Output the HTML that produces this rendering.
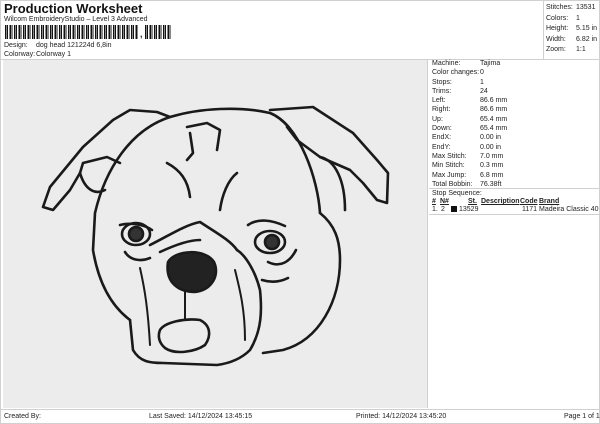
<!DOCTYPE html>
<html><head><meta charset="utf-8"><style>
*{margin:0;padding:0;box-sizing:border-box}
body{width:600px;height:424px;background:#fff;font-family:"Liberation Sans",sans-serif;color:#222;position:relative;overflow:hidden;font-size:7px}
.a{position:absolute;white-space:nowrap}
.bc{position:absolute;top:25px;height:14px;background:repeating-linear-gradient(90deg,#111 0 1.4px,#fff 1.4px 2.2px,#111 2.2px 3px,#fff 3px 4.5px)}
</style></head><body>
<div class="a" style="left:0;top:0;width:600px;height:424px;border:1px solid #d0d0d0"></div>
<div class="a" style="left:4px;top:1px;font-size:13px;font-weight:bold;color:#111">Production Worksheet</div>
<div class="a" style="left:4px;top:16px">Wilcom EmbroideryStudio – Level 3 Advanced</div>
<div class="bc" style="left:5px;width:133px"></div>
<div class="a" style="left:140px;top:29px;font-size:9px;font-weight:bold">,</div>
<div class="bc" style="left:145px;width:27px"></div>
<div class="a" style="left:4px;top:42px">Design:</div><div class="a" style="left:36px;top:42px">dog head 121224d 6,8in</div>
<div class="a" style="left:4px;top:51px">Colorway:</div><div class="a" style="left:36px;top:51px">Colorway 1</div>
<div class="a" style="left:543px;top:0;width:56px;height:59px;border-left:1px solid #d0d0d0"></div>
<div class="a" style="left:546px;top:3px;line-height:10.5px">Stitches:<br>Colors:<br>Height:<br>Width:<br>Zoom:</div>
<div class="a" style="left:576px;top:3px;line-height:10.5px">13531<br>1<br>5.15 in<br>6.82 in<br>1:1</div>
<div class="a" style="left:0;top:59px;width:600px;border-top:1px solid #d0d0d0"></div>
<div class="a" style="left:3px;top:60px;width:425px;height:348px;background:#ececec;border-right:1px solid #d0d0d0"></div>
<div class="a" style="left:432px;top:59px;line-height:9.3px">Machine:<br>Color changes:<br>Stops:<br>Trims:<br>Left:<br>Right:<br>Up:<br>Down:<br>EndX:<br>EndY:<br>Max Stitch:<br>Min Stitch:<br>Max Jump:<br>Total Bobbin:<br>Stop Sequence:</div>
<div class="a" style="left:480px;top:59px;line-height:9.3px">Tajima<br>0<br>1<br>24<br>86.6 mm<br>86.6 mm<br>65.4 mm<br>65.4 mm<br>0.00 in<br>0.00 in<br>7.0 mm<br>0.3 mm<br>6.8 mm<br>76.38ft</div>
<div class="a" style="left:429px;top:188px;width:170px;border-top:1px solid #d0d0d0"></div>
<div class="a" style="left:432px;top:198px;font-weight:bold;text-decoration:underline">#</div>
<div class="a" style="left:440px;top:198px;font-weight:bold;text-decoration:underline">N#</div>
<div class="a" style="left:468px;top:198px;font-weight:bold;text-decoration:underline">St.</div>
<div class="a" style="left:481px;top:198px;font-weight:bold;text-decoration:underline">Description</div>
<div class="a" style="left:520px;top:198px;font-weight:bold;text-decoration:underline">Code</div>
<div class="a" style="left:539px;top:198px;font-weight:bold;text-decoration:underline">Brand</div>
<div class="a" style="left:432px;top:206px">1.</div><div class="a" style="left:441px;top:206px">2</div>
<div class="a" style="left:451px;top:206px;width:6px;height:6px;background:#111"></div>
<div class="a" style="left:459px;top:206px">13529</div>
<div class="a" style="left:522px;top:206px">1171</div><div class="a" style="left:539px;top:206px">Madeira Classic 40</div>
<div class="a" style="left:429px;top:214px;width:170px;border-top:1px solid #d0d0d0"></div>
<div class="a" style="left:0;top:409px;width:600px;border-top:1px solid #d0d0d0"></div>
<div class="a" style="left:4px;top:413px">Created By:</div>
<div class="a" style="left:149px;top:413px">Last Saved: 14/12/2024 13:45:15</div>
<div class="a" style="left:356px;top:413px">Printed: 14/12/2024 13:45:20</div>
<div class="a" style="left:564px;top:413px">Page 1 of 1</div>
<svg class="a" style="left:0;top:0" width="600" height="424" viewBox="0 0 600 424" fill="none" stroke="#1a1a1a" stroke-width="2.6" stroke-linecap="round" stroke-linejoin="round">
<path d="M130 320 C110 305 98 280 93 250 L95 213 C105 170 130 130 170 117 C200 108 240 106 270 113 C300 125 318 180 320 213"/>
<path d="M320 213 C335 225 340 240 340 260 C340 300 320 340 283 350 L263 353"/>
<path d="M130 320 L133 350 C140 362 150 363 163 363 L217 365 C232 363 243 357 250 350 C262 330 262 310 260 290 C255 270 245 255 237 250"/>
<path d="M170 117 L157 112 L130 110 L113 120 L83 147 L50 187 L43 207 L53 210 L70 190 L80 173 L83 163 L107 157 L120 163"/>
<path d="M80 173 C85 190 95 195 105 190"/>
<path d="M270 110 L313 107 L353 133 L377 160 L388 173 L387 203 L377 200 L363 183 L350 170 L320 157 L297 140 L287 127"/>
<path d="M320 157 C335 160 345 180 345 210"/>
<path d="M187 127 L207 123 L220 130 L217 150"/>
<path d="M190 133 L193 153 L187 160"/>
<path d="M167 163 C180 170 188 180 190 197"/>
<path d="M237 173 C228 180 222 195 220 210"/>
<path d="M120 225 C132 222 145 225 152 230"/>
<path d="M248 225 C258 218 272 220 285 226"/>
<path d="M150 245 C170 235 185 225 200 222 C215 232 230 240 237 250"/>
<path d="M160 252 C175 245 190 240 200 240"/>
<path d="M125 252 C130 260 140 262 150 258"/>
<path d="M268 262 C280 268 290 262 296 250"/>
<path d="M262 280 C272 283 280 282 288 278"/>
<path d="M140 268 C145 290 148 310 150 345" stroke-width="2"/>
<path d="M235 270 C240 290 245 310 245 340" stroke-width="2"/>
<ellipse cx="136" cy="234" rx="14" ry="11"/>
<circle cx="136" cy="234" r="7" fill="#333"/>
<ellipse cx="270" cy="242" rx="15" ry="11"/>
<circle cx="272" cy="242" r="7" fill="#333"/>
<path d="M168 262 C175 250 205 248 214 262 C220 275 212 290 195 292 C178 292 165 282 168 262Z" fill="#222"/>
<path d="M185 292 L185 320" stroke-width="2"/>
<path d="M160 330 C165 322 185 318 200 320 C210 325 212 335 205 345 C195 352 175 355 165 348 C158 342 158 335 160 330Z"/>
</svg>
</body></html>
